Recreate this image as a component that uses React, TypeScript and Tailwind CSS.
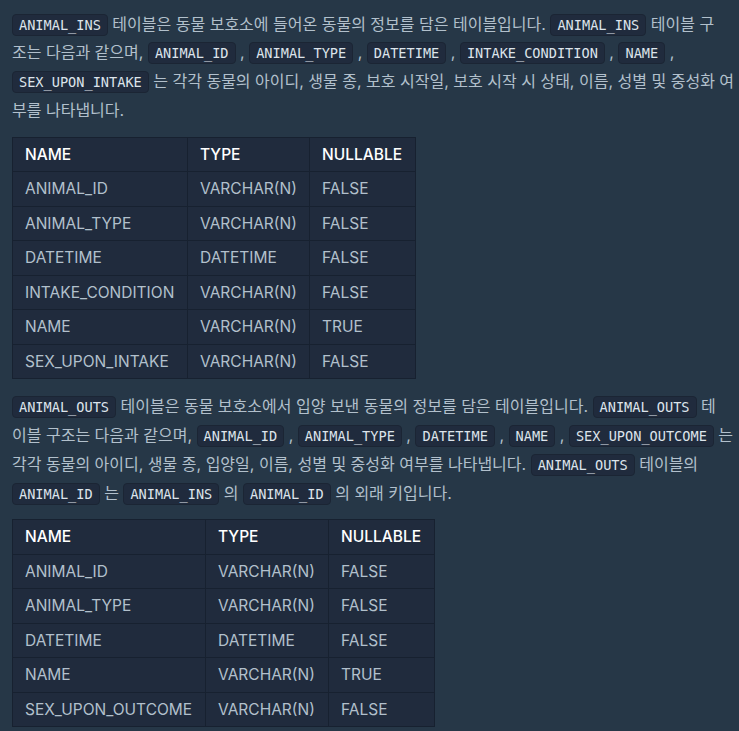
import React from "react";

const Code = ({ children }: { children: React.ReactNode }) => (
  <code className="inline-block rounded-[4px] border border-[#1b2534] bg-[#202b3d] px-[6px] font-['DejaVu_Sans_Mono',monospace] text-[13.6px] leading-[20px] text-[#dde4eb]">
    {children}
  </code>
);

type Row = [string, string, string];

const Table = ({ rows, widths }: { rows: Row[]; widths: string[] }) => (
  <table className="mt-[12px] mb-[13px] table-fixed border-collapse bg-[#202b3d] text-[15.5px] leading-[17.5px]">
    <thead>
      <tr>
        {["NAME", "TYPE", "NULLABLE"].map((h, i) => (
          <th
            key={h}
            className={`border border-[#172130] px-3 py-2 text-left font-medium text-white ${widths[i]}`}
          >
            {h}
          </th>
        ))}
      </tr>
    </thead>
    <tbody>
      {rows.map((r) => (
        <tr key={r[0]}>
          {r.map((c, i) => (
            <td key={i} className="border border-[#172130] px-3 py-2 text-[#b2c0cc]">
              {c}
            </td>
          ))}
        </tr>
      ))}
    </tbody>
  </table>
);

const ins: Row[] = [
  ["ANIMAL_ID", "VARCHAR(N)", "FALSE"],
  ["ANIMAL_TYPE", "VARCHAR(N)", "FALSE"],
  ["DATETIME", "DATETIME", "FALSE"],
  ["INTAKE_CONDITION", "VARCHAR(N)", "FALSE"],
  ["NAME", "VARCHAR(N)", "TRUE"],
  ["SEX_UPON_INTAKE", "VARCHAR(N)", "FALSE"],
];

const outs: Row[] = [
  ["ANIMAL_ID", "VARCHAR(N)", "FALSE"],
  ["ANIMAL_TYPE", "VARCHAR(N)", "FALSE"],
  ["DATETIME", "DATETIME", "FALSE"],
  ["NAME", "VARCHAR(N)", "TRUE"],
  ["SEX_UPON_OUTCOME", "VARCHAR(N)", "FALSE"],
];

export default function App() {
  return (
    <div className="min-h-screen overflow-hidden bg-[#263747] pl-3 pt-[9.5px] font-['Inter','Noto_Sans_CJK_KR',sans-serif] text-[16px] leading-[28.8px] text-[#b2c0cc]">
      <p className="w-[740px]">
        <Code>ANIMAL_INS</Code> 테이블은 동물 보호소에 들어온 동물의 정보를 담은 테이블입니다.{" "}
        <Code>ANIMAL_INS</Code> 테이블 구<br />
        조는 다음과 같으며, <Code>ANIMAL_ID</Code> , <Code>ANIMAL_TYPE</Code> ,{" "}
        <Code>DATETIME</Code> , <Code>INTAKE_CONDITION</Code> , <Code>NAME</Code> ,<br />
        <Code>SEX_UPON_INTAKE</Code> 는 각각 동물의 아이디, 생물 종, 보호 시작일, 보호 시작 시
        상태, 이름, 성별 및 중성화 여<br />
        부를 나타냅니다.
      </p>
      <Table rows={ins} widths={["w-[175px]", "w-[122px]", "w-[106px]"]} />
      <p className="w-[740px]">
        <Code>ANIMAL_OUTS</Code> 테이블은 동물 보호소에서 입양 보낸 동물의 정보를 담은
        테이블입니다. <Code>ANIMAL_OUTS</Code> 테<br />
        이블 구조는 다음과 같으며, <Code>ANIMAL_ID</Code> , <Code>ANIMAL_TYPE</Code> ,{" "}
        <Code>DATETIME</Code> , <Code>NAME</Code> , <Code>SEX_UPON_OUTCOME</Code> 는<br />
        각각 동물의 아이디, 생물 종, 입양일, 이름, 성별 및 중성화 여부를 나타냅니다.{" "}
        <Code>ANIMAL_OUTS</Code> 테이블의
        <br />
        <Code>ANIMAL_ID</Code> 는 <Code>ANIMAL_INS</Code> 의 <Code>ANIMAL_ID</Code> 의 외래
        키입니다.
      </p>
      <Table rows={outs} widths={["w-[193px]", "w-[123px]", "w-[106px]"]} />
    </div>
  );
}
